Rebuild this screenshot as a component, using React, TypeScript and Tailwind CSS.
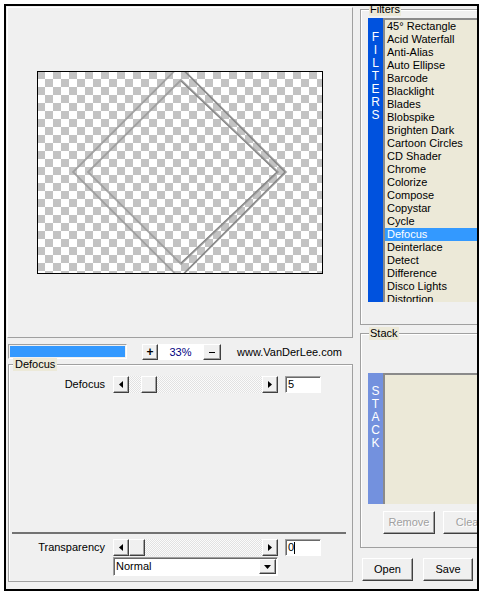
import React from 'react';

const filters = [
  '45° Rectangle',
  'Acid Waterfall',
  'Anti-Alias',
  'Auto Ellipse',
  'Barcode',
  'Blacklight',
  'Blades',
  'Blobspike',
  'Brighten Dark',
  'Cartoon Circles',
  'CD Shader',
  'Chrome',
  'Colorize',
  'Compose',
  'Copystar',
  'Cycle',
  'Defocus',
  'Deinterlace',
  'Detect',
  'Difference',
  'Disco Lights',
  'Distortion',
];

// classic 3d button edge
const raised =
  'border border-t-white border-l-white border-r-[#404040] border-b-[#404040] shadow-[inset_-1px_-1px_#a0a0a0] bg-[#f0f0f0]';
const sunken =
  'border border-t-[#a0a0a0] border-l-[#a0a0a0] border-r-white border-b-white shadow-[inset_1px_1px_#696969] bg-white';

const Arrow = ({ dir }: { dir: 'left' | 'right' | 'down' }) => {
  if (dir === 'down') {
    return (
      <svg width="7" height="4" viewBox="0 0 7 4">
        <path d="M0 0H7L3.5 4Z" fill="#000" />
      </svg>
    );
  }
  return (
    <svg width="4" height="7" viewBox="0 0 4 7">
      <path d={dir === 'left' ? 'M4 0V7L0 3.5Z' : 'M0 0V7L4 3.5Z'} fill="#000" />
    </svg>
  );
};

const ArrowBtn = ({ dir }: { dir: 'left' | 'right' }) => (
  <div className={`w-[16px] h-[17px] shrink-0 flex items-center justify-center ${raised}`}>
    <Arrow dir={dir} />
  </div>
);

const Slider = ({ thumbClass }: { thumbClass: string }) => (
  <div className="flex w-[165px] h-[17px]">
    <ArrowBtn dir="left" />
    <div className="flex-1 bg-[repeating-conic-gradient(#e2e2e2_0_25%,#fbfbfb_0_50%)] bg-[length:2px_2px]">
      <div className={`w-[16px] h-[17px] ${raised} ${thumbClass}`} />
    </div>
    <ArrowBtn dir="right" />
  </div>
);

const SliderRow = ({
  label,
  value,
  thumbClass,
  caret,
}: {
  label: string;
  value: string;
  thumbClass: string;
  caret?: boolean;
}) => (
  <div className="flex items-center h-[17px]">
    <div className="w-[96px] text-right">{label}</div>
    <div className="ml-[8px]">
      <Slider thumbClass={thumbClass} />
    </div>
    <div className={`ml-[7px] w-[36px] h-[17px] pl-[2px] flex items-center ${sunken}`}>
      {value}
      {caret && <span className="w-[1px] h-[12px] bg-black" />}
    </div>
  </div>
);

const Preview = () => (
  <svg width="284" height="201" viewBox="0 0 284 201">
    <defs>
      <pattern id="chk" width="16" height="16" patternUnits="userSpaceOnUse" patternTransform="translate(-1,-1)">
        <rect width="16" height="16" fill="#fff" />
        <rect width="8" height="8" fill="#c3c3c3" />
        <rect x="8" y="8" width="8" height="8" fill="#c3c3c3" />
      </pattern>
      <filter id="soft" x="-10%" y="-10%" width="120%" height="120%">
        <feGaussianBlur stdDeviation="0.4" />
      </filter>
    </defs>
    <rect width="284" height="201" fill="url(#chk)" />
    <g fill="none" strokeLinejoin="miter" filter="url(#soft)">
      <polygon points="141.5,-6 248,100 141.5,206 35,100" stroke="#9a9a9a" strokeWidth="1.8" strokeOpacity="0.85" />
      <polygon points="143,8 240,100 143,192 50,100" stroke="#9a9a9a" strokeWidth="1.8" strokeOpacity="0.85" />
      <polyline points="142.5,-5 247,100 142.5,205" stroke="#858585" strokeWidth="1.2" />
      <polyline points="143,9 239,100 143,191" stroke="#858585" strokeWidth="1.2" />
    </g>
  </svg>
);

const StripLetters = ({ text, className }: { text: string; className: string }) => (
  <div className={`w-[15px] h-full flex flex-col items-center text-white text-[12px] leading-[13px] ${className}`}>
    {text.split('').map((c, i) => (
      <span key={i}>{c}</span>
    ))}
  </div>
);

export default function App() {
  return (
    <div className="w-[483px] h-[595px] bg-white pt-[4px] pl-[4px] font-['Liberation_Sans',Arial,sans-serif] text-[11px] leading-[13px] text-black">
      <div className="w-[475px] h-[587px] border-2 border-black bg-[#f0f0f0] flex overflow-hidden">
        {/* left column */}
        <div className="w-[347px] shrink-0">
          <div className="ml-[1px] mt-[1px] w-[346px] h-[331px] border border-t-white border-l-white border-r-[#a0a0a0] border-b-[#a0a0a0] flex items-center justify-center">
            <div className="w-[286px] h-[203px] border border-black">
              <Preview />
            </div>
          </div>

          <div className="mt-[6px] h-[16px] flex items-start">
            <div className="ml-[2px] w-[119px] h-[15px] border border-t-[#a0a0a0] border-l-[#a0a0a0] border-r-white border-b-white p-[1px]">
              <div className="w-full h-full bg-[#3399ff]" />
            </div>
            <div className={`ml-[15px] w-[16px] h-[16px] flex items-center justify-center font-bold text-[12px] ${raised}`}>+</div>
            <div className="w-[45px] h-[16px] bg-white text-[#000080] flex items-center justify-center">33%</div>
            <div className={`w-[18px] h-[16px] flex items-center justify-center ${raised}`}>
              <span className="w-[6px] h-[1px] bg-black" />
            </div>
            <div className="ml-[16px] h-[16px] flex items-center">www.VanDerLee.com</div>
          </div>

          <div className="relative mt-[4px] ml-[2px] w-[345px] h-[218px] border border-[#a0a0a0] shadow-[inset_1px_1px_white]">
            <div className="absolute -top-[7px] left-[4px] px-[2px] bg-[#ece9d8]">Defocus</div>
            <div className="mt-[11px]">
              <SliderRow label="Defocus" value="5" thumbClass="ml-[12px]" />
            </div>
            <div className="mt-[139px] ml-[3px] w-[334px] h-[2px] bg-[#727272]" />
            <div className="mt-[5px]">
              <SliderRow label="Transparency" value="0" thumbClass="ml-0" caret />
            </div>
            <div className={`mt-[1px] ml-[104px] w-[165px] h-[19px] flex items-center justify-between pl-[2px] ${sunken}`}>
              <span>Normal</span>
              <div className={`mr-[1px] w-[17px] h-[15px] flex items-center justify-center ${raised}`}>
                <Arrow dir="down" />
              </div>
            </div>
          </div>
        </div>

        {/* right column */}
        <div className="flex-1 min-w-0 overflow-hidden">
          <div className="relative mt-[3px] ml-[7px] w-[140px] h-[316px] border border-[#a0a0a0] pt-[8px] pl-[7px] shadow-[inset_1px_1px_white]">
            <div className="absolute -top-[7px] left-[8px] px-[1px] bg-[#ece9d8]">Filters</div>
            <div className="flex h-[284px]">
              <StripLetters text="FILTERS" className="bg-[#0052de] pt-[13px]" />
              <div className="w-[100px] h-full overflow-hidden bg-[#ece9d8] border-l-2 border-t-2 border-l-[#8a8a8a] border-t-[#8a8a8a] pl-[2px]">
                {filters.map((f) => (
                  <div
                    key={f}
                    className={`h-[13px] whitespace-nowrap ${f === 'Defocus' ? 'bg-[#3399ff] text-white -ml-[2px] pl-[2px]' : ''}`}
                  >
                    {f}
                  </div>
                ))}
              </div>
            </div>
          </div>

          <div className="relative mt-[8px] ml-[7px] w-[140px] h-[215px] border border-[#a0a0a0] pt-[39px] pl-[7px] shadow-[inset_1px_1px_white]">
            <div className="absolute -top-[7px] left-[8px] px-[1px] bg-[#ece9d8]">Stack</div>
            <div className="flex h-[131px]">
              <StripLetters text="STACK" className="bg-[#7391de] pt-[12px]" />
              <div className="w-[100px] h-full bg-[#ece9d8] border-l-2 border-t-2 border-l-[#8a8a8a] border-t-[#8a8a8a]" />
            </div>
            <div className="mt-[7px] ml-[15px] flex">
              <div className={`w-[52px] h-[23px] flex items-center justify-center text-[#a0a0a0] [text-shadow:1px_1px_white] ${raised}`}>Remove</div>
              <div className={`ml-[8px] w-[52px] h-[23px] flex items-center justify-center text-[#a0a0a0] [text-shadow:1px_1px_white] ${raised}`}>Clear</div>
            </div>
          </div>

          <div className="mt-[10px] ml-[9px] flex">
            <div className={`w-[51px] h-[23px] flex items-center justify-center ${raised}`}>Open</div>
            <div className={`ml-[10px] w-[50px] h-[23px] flex items-center justify-center ${raised}`}>Save</div>
          </div>
        </div>
      </div>
    </div>
  );
}
